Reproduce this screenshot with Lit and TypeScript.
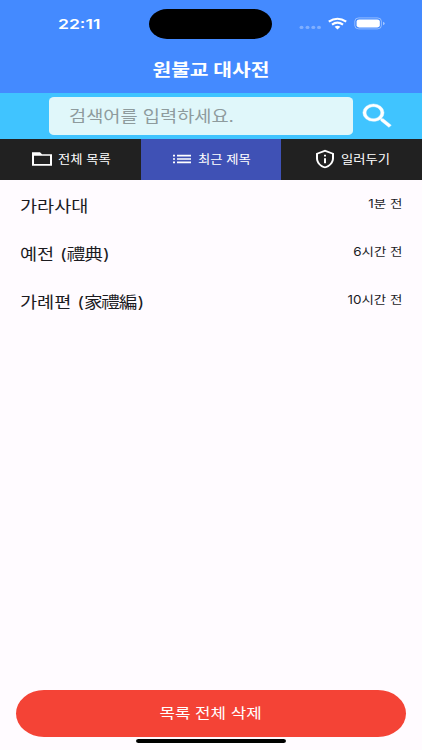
import { LitElement, html, css, svg } from "lit";
import { customElement, property } from "lit/decorators.js";

interface Entry {
  title: string;
  hanja?: string;
  time: string;
}

const ENTRIES: Entry[] = [
  { title: "가라사대", time: "1분 전" },
  { title: "예전", hanja: "禮典", time: "6시간 전" },
  { title: "가례편", hanja: "家禮編", time: "10시간 전" },
];

const folder = svg`<path d="M2 4h8l2 2.200h10V20H2zM4 8.200V18h16V8.200z"/>`;
const list = svg`<path d="M3 13h2v-2H3v2zm0 4h2v-2H3v2zm0-8h2V7H3v2zm4 4h14v-2H7v2zm0 4h14v-2H7v2zM7 7v2h14V7H7z"/>`;
const shield = svg`<path d="M12 1 3 5v6c0 5.550 3.840 10.740 9 12 5.160-1.260 9-6.450 9-12V5l-9-4zm7 10c0 4.520-2.980 8.690-7 9.930-4.020-1.240-7-5.410-7-9.930V6.300l7-3.110 7 3.110V11zM11 7h2v2h-2V7zm0 4h2v6h-2v-6z"/>`;

@customElement("status-bar")
export class StatusBar extends LitElement {
  static styles = css`
    :host { display: grid; grid-template-columns: 149px 123px 1fr; height: 48px; color: #fff; align-items: center; }
    .clock { padding-left: 58px; font: 600 13.5px/16px Inter, "Liberation Sans", sans-serif; }
    .clock span { display: inline-block; transform: scaleX(1.3); transform-origin: left; }
    .island { height: 30px; background: #000; border-radius: 18px / 15px; }
    svg { display: block; }
  `;
  render() {
    return html`
      <div class="clock"><span>22:11</span></div>
      <div class="island"></div>
      <svg width="150" height="48" viewBox="272 0 150 48">
        <g fill="#fff" fill-opacity=".32">
          <ellipse cx="301.500" cy="27.400" rx="2" ry="1.700"/><ellipse cx="307.500" cy="27.400" rx="2" ry="1.700"/>
          <ellipse cx="313.300" cy="27.400" rx="2" ry="1.700"/><ellipse cx="319" cy="27.400" rx="2" ry="1.700"/>
        </g>
        <g fill="none" stroke="#fff" stroke-width="2.200">
          <path d="M328.800 21.700Q337.500 15.800 346.200 21.700"/>
          <path d="M332 24.600Q337.500 20.600 343 24.600"/>
        </g>
        <path d="M334.600 26.800Q337.500 24.800 340.400 26.800L337.500 29.400z" fill="#fff"/>
        <rect x="354.800" y="17.900" width="26.600" height="11" rx="4" ry="3.300" fill="none" stroke="#fff" stroke-opacity=".42"/>
        <rect x="356.600" y="19.500" width="23.200" height="7.900" rx="2.500" ry="2.100" fill="#fff"/>
        <path d="M383 21.700q1.700.500 1.700 1.800t-1.700 1.800z" fill="#fff" fill-opacity=".5"/>
      </svg>
    `;
  }
}

@customElement("tab-item")
export class TabItem extends LitElement {
  @property() label = "";
  @property({ attribute: false }) icon: unknown;
  static styles = css`
    :host { display: flex; align-items: center; height: 40.500px; box-sizing: border-box; color: #fff; }
    svg { width: 24px; height: 20px; fill: #fff; flex: none; }
    span { margin-left: 4px; font-size: 12px; line-height: 16px; white-space: nowrap; transform: scaleX(1.11); transform-origin: left; padding-top: 2px; }
  `;
  render() {
    return html`<svg viewBox="0 0 24 24" preserveAspectRatio="none">${this.icon}</svg><span>${this.label}</span>`;
  }
}

@customElement("app-root")
export class AppRoot extends LitElement {
  static styles = css`
    :host {
      display: flex; flex-direction: column; width: 422px; height: 750px; overflow: hidden;
      background: #fffbff; color: #1c1b1f;
      font-family: Inter, "Noto Sans CJK KR", sans-serif;
    }
    .header { height: 93px; background: #448aff; flex: none; }
    .title { height: 41px; display: flex; justify-content: center; align-items: center; color: #fff; font-size: 17px; font-weight: 700; white-space: nowrap; }
    .title span { transform: scaleX(1.195); }
    .search { height: 46px; box-sizing: border-box; padding: 4px 0 4px 49px; background: #40c4ff; display: flex; flex: none; }
    .field { width: 304px; height: 38px; box-sizing: border-box; padding: 0 0 2px 20px; border-radius: 5px / 4px; background: #e0f7fa; display: flex; align-items: center; color: #8e9b9d; font-size: 16px; white-space: nowrap; }
    .field span { transform: scaleX(1.165); transform-origin: left; }
    .find { width: 39px; height: 32px; margin: 3px 0 0 5px; fill: #fff; stroke: #fff; stroke-width: .3px; }
    .tabs { height: 40.500px; flex: none; display: grid; grid-template-columns: 141px 140px 141px; background: #212121; }
    .t0 { padding-left: 30px; }
    .t1 { padding-left: 29px; background: #3f51b5; }
    .t2 { padding-left: 32px; }
    .list { flex: 1; padding: 1px 20px 0; }
    .row { height: 48.200px; display: flex; justify-content: space-between; align-items: center; white-space: nowrap; }
    .name { font-size: 15.500px; transform: scaleX(1.2); transform-origin: left; }
    .paren { margin-left: .500px; }
    .hanja { letter-spacing: -1px; }
    .close { margin-left: 1px; }
    .time { font-size: 11.600px; transform: scaleX(1.16); transform-origin: right; padding-bottom: 3px; }
    .clear { flex: none; height: 47px; margin: 0 16px; border-radius: 28px / 23.500px; background: #f44336; color: #fff; display: flex; justify-content: center; align-items: center; font-size: 14px; }
    .clear span { transform: scaleX(1.2); padding-bottom: 4px; }
    .home { flex: none; width: 150px; height: 4px; margin: 2px auto 7px; border-radius: 2.500px / 2px; background: #000; }
  `;
  render() {
    return html`
      <div class="header">
        <status-bar></status-bar>
        <div class="title"><span>원불교 대사전</span></div>
      </div>
      <div class="search">
        <div class="field"><span>검색어를 입력하세요.</span></div>
        <svg class="find" viewBox="0 0 24 24" preserveAspectRatio="none"><path d="M15.500 14h-.790l-.280-.270A6.471 6.471 0 0 0 16 9.500 6.500 6.500 0 1 0 9.500 16c1.610 0 3.090-.590 4.230-1.570l.270.280v.790l5 4.990L20.490 19l-4.990-5zm-6 0C7.010 14 5 11.990 5 9.500S7.010 5 9.500 5 14 7.010 14 9.500 11.990 14 9.500 14z"/></svg>
      </div>
      <div class="tabs">
        <tab-item class="t0" label="전체 목록" .icon=${folder}></tab-item>
        <tab-item class="t1" label="최근 제목" .icon=${list}></tab-item>
        <tab-item class="t2" label="일러두기" .icon=${shield}></tab-item>
      </div>
      <div class="list">
        ${ENTRIES.map((e) => html`<div class="row"><span class="name">${e.title}${e.hanja
          ? html` <span class="paren">(</span><span class="hanja">${e.hanja}</span><span class="close">)</span>`
          : ""}</span><span class="time">${e.time}</span></div>`)}
      </div>
      <div class="clear"><span>목록 전체 삭제</span></div>
      <div class="home"></div>
    `;
  }
}
